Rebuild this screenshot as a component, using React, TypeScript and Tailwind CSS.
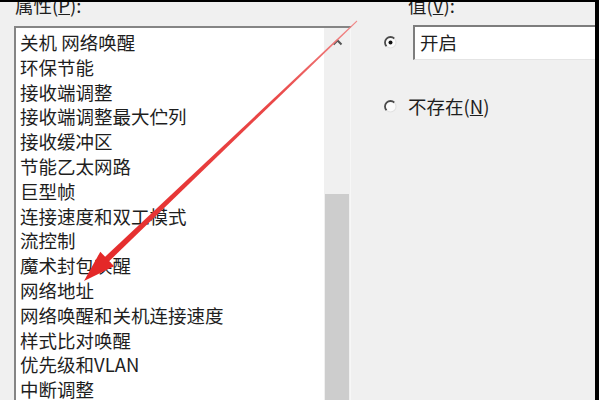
import React from 'react';

const items = [
    '关机 网络唤醒',
    '环保节能',
    '接收端调整',
    '接收端调整最大伫列',
    '接收缓冲区',
    '节能乙太网路',
    '巨型帧',
    '连接速度和双工模式',
    '流控制',
    '魔术封包唤醒',
    '网络地址',
    '网络唤醒和关机连接速度',
    '样式比对唤醒',
    '优先级和VLAN',
    '中断调整',
    '传输缓冲区',
];

const Radio: React.FC<{ checked?: boolean }> = ({ checked = false }) => (
    <svg width="13" height="13" viewBox="0 0 13 13" className="shrink-0">
        <circle cx="6.5" cy="6.5" r="5.5" fill="#fbfbfb" />
        <path d="M10.4 2.6 A5.5 5.5 0 0 0 2.6 10.4" fill="none" stroke="#4a4a4a" strokeWidth="1.8" />
        <path d="M2.6 10.4 A5.5 5.5 0 0 0 10.4 2.6" fill="none" stroke="#e2e2e2" strokeWidth="1.2" />
        {checked && <circle cx="6.5" cy="6.5" r="2" fill="#111" />}
    </svg>
);

// red arrow drawn over the dialog
const Arrow = () => {
    const tip = [84, 279];
    const start = [357, 19];
    const dx = start[0] - tip[0];
    const dy = start[1] - tip[1];
    const len = Math.hypot(dx, dy);
    const u = [dx / len, dy / len];
    const n = [-u[1], u[0]];
    const headLen = 32;
    const base = [tip[0] + u[0] * headLen, tip[1] + u[1] * headLen];
    const hw = 10;
    const shaftBase = [tip[0] + u[0] * (headLen - 4), tip[1] + u[1] * (headLen - 4)];
    const p = (x: number, y: number) => `${x.toFixed(1)},${y.toFixed(1)}`;
    const shaft = [
        p(start[0] + n[0] * 0.5, start[1] + n[1] * 0.5),
        p(shaftBase[0] + n[0] * 3, shaftBase[1] + n[1] * 3),
        p(shaftBase[0] - n[0] * 3, shaftBase[1] - n[1] * 3),
        p(start[0] - n[0] * 0.5, start[1] - n[1] * 0.5),
    ].join(' ');
    const head = [
        p(tip[0], tip[1]),
        p(base[0] + n[0] * hw, base[1] + n[1] * hw),
        p(base[0] - n[0] * hw, base[1] - n[1] * hw),
    ].join(' ');
    return (
        <svg className="absolute inset-0 pointer-events-none" width="599" height="400">
            <defs>
                <linearGradient id="shaftGrad" x1={start[0]} y1={start[1]} x2={tip[0]} y2={tip[1]} gradientUnits="userSpaceOnUse">
                    <stop offset="0" stopColor="#f08a8a" />
                    <stop offset="0.3" stopColor="#ea4848" />
                    <stop offset="1" stopColor="#e42828" />
                </linearGradient>
            </defs>
            <polygon points={shaft} fill="url(#shaftGrad)" />
            <polygon points={head} fill="#e42828" />
        </svg>
    );
};

export default function App() {
    return (
        <div className="relative w-[599px] h-[400px] overflow-hidden bg-[#f0f0f0] border-t-2 border-r-4 border-black flex text-[#1e1e1e] font-['Noto_Sans_CJK_SC','Noto_Sans',sans-serif]">
            <div className="w-[351px] pl-[14px] flex flex-col shrink-0">
                <div className="h-6 -mt-[9px] leading-6 text-[18.5px] pl-[1px]">
                    属性(<u>P</u>):
                </div>
                <div className="mt-[9px] flex-1 flex border-t-2 border-l-2 border-[#858585] bg-white">
                    <div className="flex-1 pl-[4px] pt-[2px]">
                        {items.map((item) => (
                            <div key={item} className="h-[24.8px] leading-[24.8px] text-[18.5px] whitespace-nowrap">
                                {item}
                            </div>
                        ))}
                    </div>
                    <div className="w-[27px] flex flex-col bg-[#f0f0f0] border-r border-[#f7f7f7]">
                        <div className="h-[28px] flex items-center justify-center">
                            <svg width="11" height="8" viewBox="0 0 11 8">
                                <path d="M1.5 6.5 L5.5 2.5 L9.5 6.5" fill="none" stroke="#555" strokeWidth="2" />
                            </svg>
                        </div>
                        <div className="h-[138px]" />
                        <div className="flex-1 mx-[1px] bg-[#cdcdcd]" />
                    </div>
                </div>
            </div>
            <div className="flex-1 flex flex-col">
                <div className="h-6 -mt-[9px] leading-6 text-[18.5px] pl-[57px]">
                    值(<u>V</u>):
                </div>
                <div className="mt-[8px] flex items-center pl-[33px]">
                    <Radio checked />
                    <div className="ml-[16px] flex-1 h-[35px] flex items-center bg-white border-t-2 border-l-2 border-[#7d7d7d] border-b border-b-[#e4e4e4] pl-[5px] text-[18.5px]">
                        开启
                    </div>
                </div>
                <div className="mt-[34px] h-6 flex items-center pl-[33px]">
                    <Radio />
                    <span className="ml-[11px] text-[18.5px] leading-6">
                        不存在(<u>N</u>)
                    </span>
                </div>
            </div>
            <Arrow />
        </div>
    );
}
